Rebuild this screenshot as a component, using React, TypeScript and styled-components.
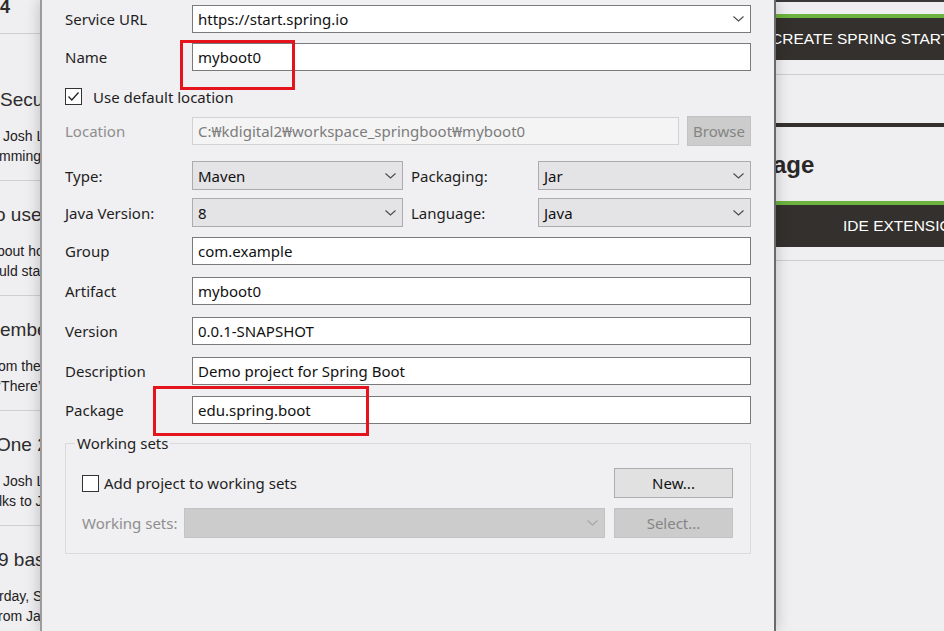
import React from "react";
import styled, { createGlobalStyle } from "styled-components";

const Global = createGlobalStyle`
  html, body { margin: 0; padding: 0; background: #efeef0; overflow: hidden; }
  #root { width: 944px; height: 631px; }
`;

const Page = styled.div`
  display: flex;
  width: 944px;
  height: 631px;
  overflow: hidden;
  background: #efeef0;
`;

/* ---------- left: blog page behind the dialog ---------- */
const BlogStrip = styled.div`
  width: 40px;
  flex: none;
  overflow: hidden;
  font-family: "Liberation Sans", Arial, sans-serif;
  color: #2d2b2c;
  background: #efeef0;
`;

const TopTail = styled.div`
  height: 33px;
  border-bottom: 1px solid #cfcfcf;
  font-size: 18px;
  font-weight: bold;
  line-height: 14px;
  white-space: nowrap;
`;

const Post = styled.div<{ $top: number }>`
  padding: ${(p) => p.$top}px 0 14px 0;
  border-bottom: 1px solid #cfcfcf;
`;

const PostTitle = styled.div<{ $shift?: number }>`
  font-size: 19px;
  line-height: 24px;
  white-space: nowrap;
  margin-left: ${(p) => p.$shift ?? 0}px;
  margin-bottom: 14px;
`;

const PostMeta = styled.div<{ $shift?: number }>`
  font-size: 14px;
  line-height: 20px;
  color: #222022;
  white-space: nowrap;
  margin-left: ${(p) => p.$shift ?? 0}px;
`;

/* ---------- right: spring site behind the dialog ---------- */
const SiteStrip = styled.div`
  flex: 1;
  overflow: hidden;
  background: #efeef0;
  border-top: 2px solid #3b3838;
  font-family: "Liberation Sans", Arial, sans-serif;
`;

const ActionBar = styled.div<{ $mt: number; $indent: number }>`
  margin-top: ${(p) => p.$mt}px;
  border-top: 4px solid #6db33f;
  height: 42px;
  background: #34302d;
  color: #ffffff;
  font-size: 15.5px;
  line-height: 42px;
  white-space: nowrap;
  text-indent: ${(p) => p.$indent}px;
`;

const Rule = styled.div<{ $mt: number }>`
  margin-top: ${(p) => p.$mt}px;
  border-top: 1px solid #cdcdcd;
`;

const ThickRule = styled.div<{ $mt: number }>`
  margin-top: ${(p) => p.$mt}px;
  height: 4px;
  background: #34302d;
`;

const SiteHeading = styled.div`
  margin-top: 23px;
  font-size: 24px;
  font-weight: bold;
  line-height: 30px;
  color: #2a2727;
  white-space: nowrap;
  text-indent: -3px;
`;

/* ---------- dialog ---------- */
const Dialog = styled.div`
  position: relative;
  z-index: 1;
  width: 736px;
  height: 631px;
  flex: none;
  box-sizing: border-box;
  background: #f0eff1;
  border-left: 2px solid #9c9c9c;
  border-right: 2px solid #6a6a6a;
  box-shadow: 0 0 14px rgba(0, 0, 0, 0.22);
  padding: 5px 23px 0 23px;
  display: flex;
  flex-direction: column;
  font-family: "Noto Sans", "Segoe UI", sans-serif;
  font-size: 15px;
  color: #1e1e1e;
`;

const Row = styled.div<{ $mt?: number; $h?: number }>`
  display: grid;
  grid-template-columns: 127px 1fr;
  align-items: center;
  margin-top: ${(p) => p.$mt ?? 0}px;
  height: ${(p) => p.$h ?? 28}px;
`;

const SplitRow = styled(Row)`
  grid-template-columns: 127px 211px 135px 1fr;
`;

const BrowseRow = styled(Row)`
  grid-template-columns: 127px 1fr 72px;
`;

const Label = styled.span<{ $disabled?: boolean; $pad?: number }>`
  color: ${(p) => (p.$disabled ? "#8e8e8e" : "#1e1e1e")};
  line-height: 20px;
  white-space: nowrap;
  padding-left: ${(p) => p.$pad ?? 0}px;
`;

const TextBox = styled.div<{ $disabled?: boolean }>`
  height: 28px;
  box-sizing: border-box;
  border: 1px solid ${(p) => (p.$disabled ? "#d2d2d2" : "#7a7a7a")};
  background: ${(p) => (p.$disabled ? "#f4f4f4" : "#ffffff")};
  color: ${(p) => (p.$disabled ? "#7c7c7c" : "#111111")};
  padding: 0 5px;
  display: flex;
  align-items: center;
  white-space: nowrap;
  overflow: hidden;
`;

type ComboKind = "white" | "gray" | "disabled";

const comboBg: Record<ComboKind, string> = { white: "#ffffff", gray: "#e4e3e6", disabled: "#cccccc" };
const comboBorder: Record<ComboKind, string> = { white: "#7a7a7a", gray: "#acacac", disabled: "#c2c2c2" };

const ComboBox = styled.div<{ $kind: ComboKind; $h?: number }>`
  height: ${(p) => p.$h ?? 29}px;
  box-sizing: border-box;
  border: 1px solid ${(p) => comboBorder[p.$kind]};
  background: ${(p) => comboBg[p.$kind]};
  color: #111111;
  padding: 0 6px 0 5px;
  display: flex;
  align-items: center;
  justify-content: space-between;
  white-space: nowrap;
`;

const Button = styled.div<{ $disabled?: boolean; $w: number }>`
  width: ${(p) => p.$w}px;
  height: 30px;
  box-sizing: border-box;
  justify-self: end;
  border: 1px solid ${(p) => (p.$disabled ? "#c2c2c2" : "#adadad")};
  background: ${(p) => (p.$disabled ? "#cccccc" : "#e1e1e1")};
  color: ${(p) => (p.$disabled ? "#858585" : "#111111")};
  display: flex;
  align-items: center;
  justify-content: center;
`;

const CheckRow = styled.div<{ $mt?: number; $gap: number }>`
  display: flex;
  align-items: center;
  gap: ${(p) => p.$gap}px;
  margin-top: ${(p) => p.$mt ?? 0}px;
  height: 17px;
  line-height: 20px;
`;

const Box = styled.span`
  width: 17px;
  height: 17px;
  box-sizing: border-box;
  border: 1px solid #333333;
  background: #ffffff;
  display: inline-flex;
  flex: none;
`;

const Group = styled.fieldset`
  margin: 9px 0 0 0;
  padding: 0;
  border: 1px solid #dadada;
  min-width: 0;
`;

const Legend = styled.legend`
  margin-left: 9px;
  padding: 0 2px;
  line-height: 20px;
  color: #1e1e1e;
`;

const GroupBody = styled.div`
  padding: 15px 17px 15px 16px;
  display: flex;
  flex-direction: column;
  gap: 10px;
`;

const GroupTopRow = styled.div`
  height: 30px;
  display: flex;
  align-items: center;
  justify-content: space-between;
`;

const GroupSetRow = styled.div`
  height: 30px;
  display: grid;
  grid-template-columns: 102px 1fr 128px;
  align-items: center;
`;

const Highlight = styled.div<{ $l: number; $t: number; $w: number; $h: number }>`
  position: absolute;
  left: ${(p) => p.$l}px;
  top: ${(p) => p.$t}px;
  width: ${(p) => p.$w}px;
  height: ${(p) => p.$h}px;
  box-sizing: border-box;
  border: 3px solid #e5131b;
  pointer-events: none;
`;

const Chevron = ({ color = "#4a4a4a" }: { color?: string }) => (
  <svg width="11" height="6" viewBox="0 0 11 6" style={{ flex: "none" }}>
    <polyline points="0.5,0.5 5.5,5 10.5,0.5" fill="none" stroke={color} strokeWidth="1.1" />
  </svg>
);

const CheckBox = ({ checked }: { checked?: boolean }) => (
  <Box>
    {checked && (
      <svg width="15" height="15" viewBox="0 0 15 15">
        <polyline points="2.5,7.5 5.8,11 12.5,3.5" fill="none" stroke="#222" strokeWidth="1.3" />
      </svg>
    )}
  </Box>
);

const Combo = ({ kind, value, h }: { kind: ComboKind; value: string; h?: number }) => (
  <ComboBox $kind={kind} $h={h}>
    <span>{value}</span>
    <Chevron color={kind === "disabled" ? "#a6a6a6" : "#4a4a4a"} />
  </ComboBox>
);

const posts = [
  { top: 54, title: "Secur", ts: 0, m1: "Josh L", m1s: 3, m2: "mmings", m2s: -1 },
  { top: 22, title: "o use", ts: -5, m1: "bout ho", m1s: -3, m2: "uld sta", m2s: -1 },
  { top: 22, title: "embe", ts: 0, m1: "om the", m1s: -2, m2: "‘There’", m2s: -2 },
  { top: 22, title: "One 2", ts: -4, m1: "Josh L", m1s: 3, m2: "lks to J", m2s: -1 },
  { top: 22, title: "9 bas", ts: -2, m1: "rday, S", m1s: -1, m2: "rom Ja", m2s: -2 },
];

export default function App() {
  return (
    <>
      <Global />
      <Page>
        <BlogStrip>
          <TopTail>4</TopTail>
          {posts.map((p, i) => (
            <Post key={i} $top={p.top}>
              <PostTitle $shift={p.ts}>{p.title}</PostTitle>
              <PostMeta $shift={p.m1s}>{p.m1}</PostMeta>
              <PostMeta $shift={p.m2s}>{p.m2}</PostMeta>
            </Post>
          ))}
        </BlogStrip>

        <Dialog>
          <Row>
            <Label>Service URL</Label>
            <Combo kind="white" value="https://start.spring.io" h={28} />
          </Row>
          <Row $mt={10}>
            <Label>Name</Label>
            <TextBox>myboot0</TextBox>
          </Row>
          <CheckRow $mt={17} $gap={11}>
            <CheckBox checked />
            <span>Use default location</span>
          </CheckRow>
          <BrowseRow $mt={11} $h={30}>
            <Label $disabled>Location</Label>
            <TextBox $disabled>C:₩kdigital2₩workspace_springboot₩myboot0</TextBox>
            <Button $disabled $w={64}>Browse</Button>
          </BrowseRow>
          <SplitRow $mt={15} $h={29}>
            <Label>Type:</Label>
            <Combo kind="gray" value="Maven" />
            <Label $pad={8}>Packaging:</Label>
            <Combo kind="gray" value="Jar" />
          </SplitRow>
          <SplitRow $mt={8} $h={29}>
            <Label>Java Version:</Label>
            <Combo kind="gray" value="8" />
            <Label $pad={8}>Language:</Label>
            <Combo kind="gray" value="Java" />
          </SplitRow>
          <Row $mt={10}>
            <Label>Group</Label>
            <TextBox>com.example</TextBox>
          </Row>
          <Row $mt={12}>
            <Label>Artifact</Label>
            <TextBox>myboot0</TextBox>
          </Row>
          <Row $mt={12}>
            <Label>Version</Label>
            <TextBox>0.0.1-SNAPSHOT</TextBox>
          </Row>
          <Row $mt={12}>
            <Label>Description</Label>
            <TextBox>Demo project for Spring Boot</TextBox>
          </Row>
          <Row $mt={11}>
            <Label>Package</Label>
            <TextBox>edu.spring.boot</TextBox>
          </Row>

          <Group>
            <Legend>Working sets</Legend>
            <GroupBody>
              <GroupTopRow>
                <CheckRow $gap={5}>
                  <CheckBox />
                  <span>Add project to working sets</span>
                </CheckRow>
                <Button $w={119}>New...</Button>
              </GroupTopRow>
              <GroupSetRow>
                <Label $disabled>Working sets:</Label>
                <Combo kind="disabled" value="" h={30} />
                <Button $disabled $w={119}>Select...</Button>
              </GroupSetRow>
            </GroupBody>
          </Group>

          <Highlight $l={138} $t={40} $w={115} $h={50} />
          <Highlight $l={111} $t={386} $w={216} $h={50} />
        </Dialog>

        <SiteStrip>
          <ActionBar $mt={12} $indent={-5}>CREATE SPRING STARTER PROJECT</ActionBar>
          <Rule $mt={14} />
          <ThickRule $mt={48} />
          <SiteHeading>age</SiteHeading>
          <ActionBar $mt={21} $indent={67}>IDE EXTENSIONS</ActionBar>
          <Rule $mt={13} />
        </SiteStrip>
      </Page>
    </>
  );
}
